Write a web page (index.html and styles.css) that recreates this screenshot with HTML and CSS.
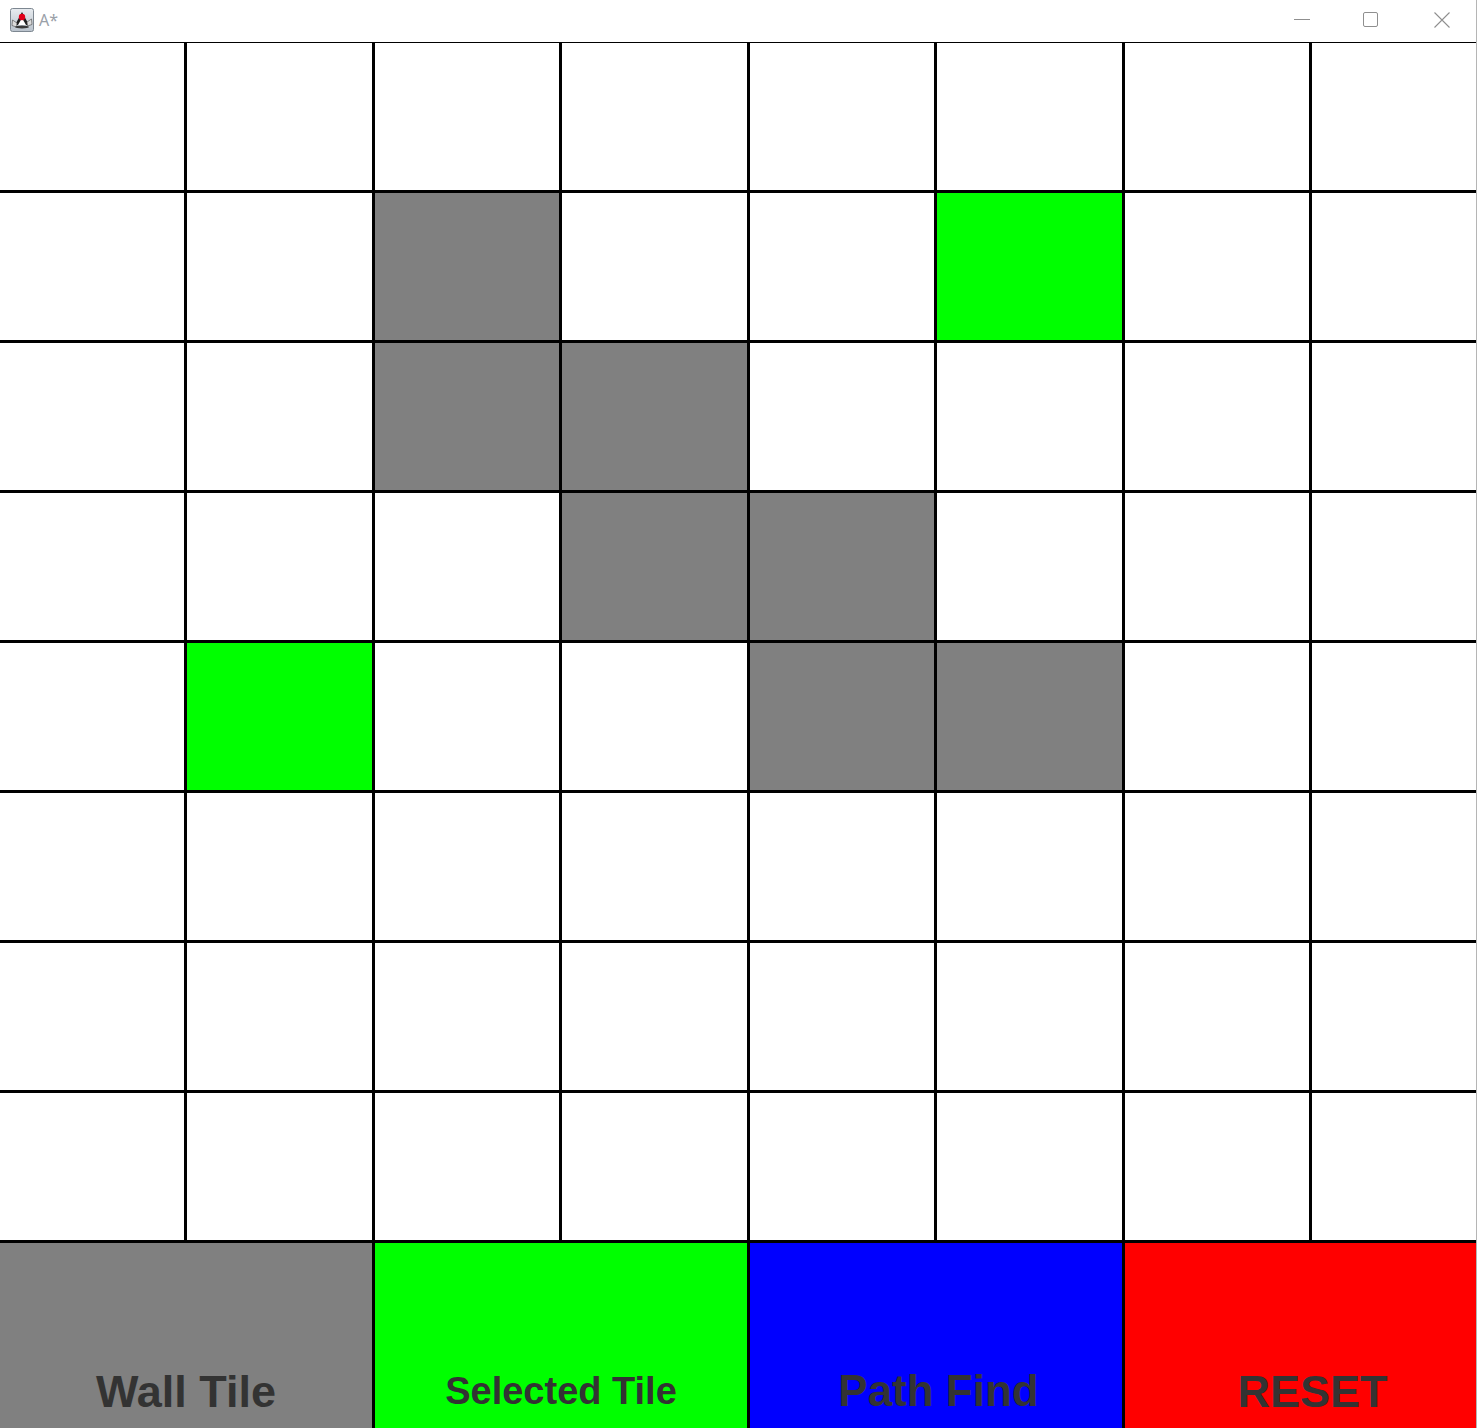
FILE: index.html
```html
<!DOCTYPE html>
<html>
<head>
<meta charset="utf-8">
<title>A*</title>
<link rel="stylesheet" href="styles.css">
</head>
<body>
<div class="window">
  <div class="titlebar">
    <div class="title-left">
      <svg class="app-icon" width="24" height="24" viewBox="0 0 24 24">
        <defs>
          <linearGradient id="ig" x1="0" y1="0" x2="0" y2="1">
            <stop offset="0" stop-color="#e8ecf0"/>
            <stop offset="1" stop-color="#b9c2cc"/>
          </linearGradient>
        </defs>
        <rect x="0.5" y="0.5" width="23" height="23" rx="2" fill="url(#ig)" stroke="#7d8791"/>
        <path d="M12 4 L5 17 L19 17 Z" fill="#1d1d1d"/>
        <path d="M12 10 L8 17 L16 17 Z" fill="#ffffff"/>
        <path d="M2.5 12 L7 15 L6.5 19 L2 17.5 Z" fill="#dcdcdc" stroke="#444" stroke-width="0.6"/>
        <path d="M21.5 11 L17 14 L17.5 18 L22 16.5 Z" fill="#dcdcdc" stroke="#444" stroke-width="0.6"/>
        <ellipse cx="12" cy="19" rx="7" ry="1.5" fill="#3a3a3a"/>
        <circle cx="12" cy="9" r="3.2" fill="#e2001a"/>
      </svg>
      <span class="title-text">A*</span>
    </div>
    <div class="controls">
      <svg class="ctl" width="70" height="42" viewBox="0 0 70 42">
        <line x1="17" y1="19.5" x2="33" y2="19.5" stroke="#8f8f8f" stroke-width="1"/>
      </svg>
      <svg class="ctl" width="70" height="42" viewBox="0 0 70 42">
        <rect x="16.5" y="12.5" width="14" height="14" rx="1.5" fill="none" stroke="#8f8f8f" stroke-width="1"/>
      </svg>
      <svg class="ctl" width="59" height="42" viewBox="0 0 59 42">
        <path d="M17.5 12.5 L32.5 27.5 M32.5 12.5 L17.5 27.5" stroke="#8f8f8f" stroke-width="1.1" fill="none"/>
      </svg>
    </div>
  </div>
  <div class="content">
    <div class="grid">
      <div class="cell"></div><div class="cell"></div><div class="cell"></div><div class="cell"></div><div class="cell"></div><div class="cell"></div><div class="cell"></div><div class="cell"></div>
      <div class="cell"></div><div class="cell"></div><div class="cell wall"></div><div class="cell"></div><div class="cell"></div><div class="cell selected"></div><div class="cell"></div><div class="cell"></div>
      <div class="cell"></div><div class="cell"></div><div class="cell wall"></div><div class="cell wall"></div><div class="cell"></div><div class="cell"></div><div class="cell"></div><div class="cell"></div>
      <div class="cell"></div><div class="cell"></div><div class="cell"></div><div class="cell wall"></div><div class="cell wall"></div><div class="cell"></div><div class="cell"></div><div class="cell"></div>
      <div class="cell"></div><div class="cell selected"></div><div class="cell"></div><div class="cell"></div><div class="cell wall"></div><div class="cell wall"></div><div class="cell"></div><div class="cell"></div>
      <div class="cell"></div><div class="cell"></div><div class="cell"></div><div class="cell"></div><div class="cell"></div><div class="cell"></div><div class="cell"></div><div class="cell"></div>
      <div class="cell"></div><div class="cell"></div><div class="cell"></div><div class="cell"></div><div class="cell"></div><div class="cell"></div><div class="cell"></div><div class="cell"></div>
      <div class="cell"></div><div class="cell"></div><div class="cell"></div><div class="cell"></div><div class="cell"></div><div class="cell"></div><div class="cell"></div><div class="cell"></div>
    </div>
    <div class="buttons">
      <div class="btn btn-wall"><span>Wall Tile</span></div>
      <div class="btn btn-selected"><span>Selected Tile</span></div>
      <div class="btn btn-path"><span>Path Find</span></div>
      <div class="btn btn-reset"><span>RESET</span></div>
    </div>
  </div>
</div>
</body>
</html>
```

FILE: styles.css
```css
html, body {
  margin: 0;
  padding: 0;
  background: #ffffff;
  overflow: hidden;
}

.window {
  width: 1477px;
  height: 1428px;
  overflow: hidden;
  background: #ffffff;
}

.titlebar {
  height: 42px;
  display: flex;
  justify-content: space-between;
  align-items: stretch;
  background: #ffffff;
  width: 1476px;
  border-right: 1px solid #b5b5b5;
}

.title-left {
  display: flex;
  align-items: center;
  padding-left: 10px;
  gap: 5px;
}

.app-icon {
  display: block;
  margin-top: -3px;
}

.title-text {
  font-family: "Noto Sans", "Open Sans", sans-serif;
  font-size: 16px;
  color: #9aa0a8;
  margin-top: -2px;
}

.controls {
  display: flex;
  align-items: flex-start;
}

.ctl {
  display: block;
}

.content {
  width: 1476px;
  height: 1386px;
  overflow: hidden;
  border-right: 1px solid #b5b5b5;
}

.grid {
  width: 1500px;
  display: grid;
  grid-template-columns: 187px 188px 187px 188px 187px 188px 187px 188px;
  grid-template-rows: repeat(8, 150px);
  border-top: 1px solid #000000;
}

.cell {
  box-sizing: border-box;
  background: #ffffff;
  border-right: 3px solid #000000;
  border-bottom: 3px solid #000000;
}

.cell.wall {
  background: #808080;
}

.cell.selected {
  background: #00ff00;
}

.buttons {
  width: 1500px;
  display: grid;
  grid-template-columns: repeat(4, 375px);
  height: 296px;
}

.btn {
  box-sizing: border-box;
  border-right: 3px solid #000000;
  display: flex;
  align-items: center;
  justify-content: center;
  font-family: "Liberation Sans", Arial, sans-serif;
  font-weight: bold;
  color: #333333;
  font-size: 45px;
  line-height: 45px;
}

.btn span {
  display: block;
}

.btn-wall {
  background: #808080;
}

.btn-selected {
  background: #00ff00;
  font-size: 38px;
  line-height: 38px;
}

.btn-path {
  background: #0000ff;
  font-size: 44px;
  line-height: 44px;
}

.btn-path span {
  padding-left: 5px;
}

.btn-reset {
  background: #ff0000;
  border-right: none;
}
```
